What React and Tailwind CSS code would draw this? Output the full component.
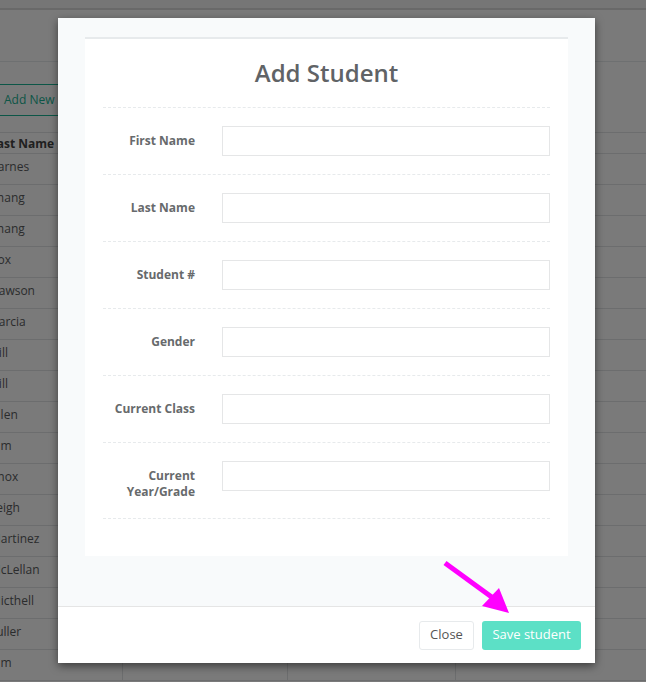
import React from 'react'

const rows = [
  'Barnes', 'Zhang', 'Zhang', 'Cox', 'Dawson', 'Garcia', 'Hill', 'Hill', 'Allen',
  'Kim', 'Knox', 'Leigh', 'Martinez', 'McLellan', 'Micthell', 'Fuller', 'Kim',
]

const fields = ['First Name', 'Last Name', 'Student #', 'Gender', 'Current Class', 'Current Year/Grade']

function Row({ children, head }) {
  return (
    <div
      className={
        'flex border-b border-[#e2e4e6] text-[12px] leading-[17px] text-[#5a5c5e] ' +
        (head ? 'h-[22px] border-t font-bold text-[#444]' : 'h-[31px]')
      }
    >
      <div className={'flex w-[140px] pl-[8px] ' + (head ? 'items-center' : 'pt-[4px]')}>{children}</div>
      <div className="w-[165px] border-l border-[#e2e4e6]" />
      <div className="w-[168px] border-l border-[#e2e4e6]" />
      <div className="flex-1 border-l border-[#e2e4e6]" />
    </div>
  )
}

function Field({ label }) {
  return (
    <div className="flex border-t border-dashed border-[#e7eaec] pt-[18px] pb-[18px]">
      <label className="w-[92px] pt-[7px] text-right text-[12px] font-bold leading-[16px] text-[#676a6c]">
        {label}
      </label>
      <input className="ml-[27px] h-[30px] flex-1 border border-[#e5e6e7] bg-white px-3 outline-none" />
    </div>
  )
}

export default function App() {
  return (
    <div className="relative h-[682px] w-[646px] overflow-hidden bg-white font-['Open_Sans',sans-serif]">
      <div className="h-[10px] border-b-2 border-[#dcdcdc] bg-[#f6f6f6]" />
      <div className="h-[52px] border-b border-[#e7eaec]" />
      <div className="mt-[22px] ml-[-6px] inline-flex h-[32px] items-center rounded-[3px] border border-[#1ab394] px-[9px] text-[12px] text-[#1ab394]">
        Add New
      </div>
      <div className="mt-[16px] ml-[-18px]">
        <Row head>Last Name</Row>
        {rows.map((name, i) => (
          <Row key={i}>{name}</Row>
        ))}
      </div>

      <div className="absolute inset-0 bg-black/[0.52]" />

      <div className="absolute top-[18px] left-[58px] w-[537px] rounded-[2px] shadow-[0_3px_9px_rgba(0,0,0,0.5)]">
        <div className="bg-[#f8fafb] px-[27px] pt-[19px] pb-[50px]">
          <div className="border-t-2 border-[#e7eaec] bg-white px-[18px] pb-[37px]">
            <div className="flex h-[68px] items-center justify-center">
              <h1 className="text-[24px] font-semibold text-[#606366]">Add Student</h1>
            </div>
            {fields.map((f) => (
              <Field key={f} label={f} />
            ))}
            <div className="border-t border-dashed border-[#e7eaec]" />
          </div>
        </div>
        <div className="flex h-[57px] items-center justify-end gap-[8px] border-t border-[#e5e5e5] bg-white pr-[14px]">
          <button className="h-[29px] w-[55px] rounded-[3px] border border-[#e7eaec] bg-white text-[13px] text-[#555]">
            Close
          </button>
          <button className="h-[29px] w-[99px] rounded-[3px] bg-[#5ce0c6] text-[13px] text-white">
            Save student
          </button>
        </div>
      </div>

      <svg className="absolute top-0 left-0" width="646" height="682" viewBox="0 0 646 682">
        <line x1="445" y1="563" x2="493" y2="598" stroke="#ff00ff" strokeWidth="5" />
        <polygon points="509,613 482,606 499,588" fill="#ff00ff" />
      </svg>
    </div>
  )
}
